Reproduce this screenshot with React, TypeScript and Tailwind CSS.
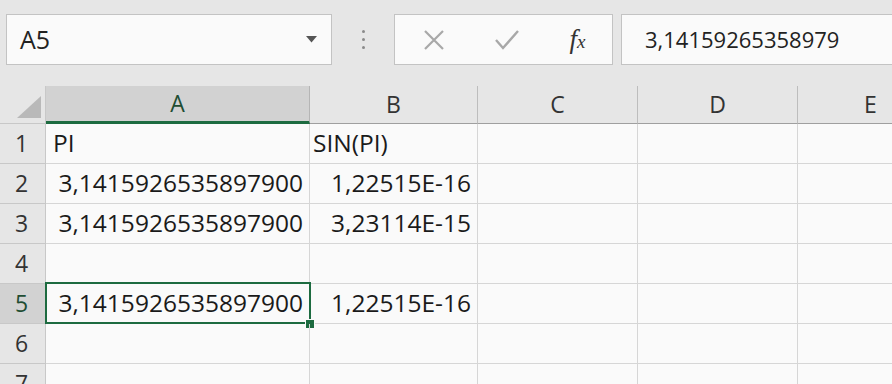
import React from "react";

const font = { fontFamily: '"Open Sans", "Noto Sans", Arial, sans-serif' };

const cols = ["A", "B", "C", "D", "E"];

interface Row {
  n: number;
  a?: string;
  b?: string;
  aRight?: boolean;
  bRight?: boolean;
}

const rows: Row[] = [
  { n: 1, a: "PI", b: "SIN(PI)" },
  { n: 2, a: "3,1415926535897900", b: "1,22515E-16", aRight: true, bRight: true },
  { n: 3, a: "3,1415926535897900", b: "3,23114E-15", aRight: true, bRight: true },
  { n: 4 },
  { n: 5, a: "3,1415926535897900", b: "1,22515E-16", aRight: true, bRight: true },
  { n: 6 },
  { n: 7 },
];

const FormulaBar: React.FC = () => (
  <div className="h-[86px] bg-[#e6e6e6] flex items-start pt-[14px] pl-[6px]">
    {/* name box */}
    <div className="w-[326px] h-[51px] bg-[#fafafa] border border-[#c3c3c3] flex items-center pl-[13px] pr-[14px] justify-between">
      <span className="text-[25px] text-[#222]">A5</span>
      <svg width="11" height="7" viewBox="0 0 11 7">
        <path d="M0 0 L11 0 L5.5 6.5 Z" fill="#555" />
      </svg>
    </div>
    {/* separator dots */}
    <div className="w-[62px] h-[51px] flex flex-col items-center justify-center gap-[5px]">
      <span className="w-[3px] h-[3px] rounded-full bg-[#8a8a8a]" />
      <span className="w-[3px] h-[3px] rounded-full bg-[#8a8a8a]" />
      <span className="w-[3px] h-[3px] rounded-full bg-[#8a8a8a]" />
    </div>
    {/* buttons */}
    <div className="w-[219px] h-[51px] bg-[#fafafa] border border-[#c3c3c3] flex items-center">
      <div className="w-[73px] flex justify-center pl-[4px]">
        <svg width="22" height="22" viewBox="0 0 22 22">
          <path d="M2 2 L20 20 M20 2 L2 20" stroke="#a8a8a8" strokeWidth="2.2" />
        </svg>
      </div>
      <div className="w-[73px] flex justify-center pl-[4px]">
        <svg width="26" height="22" viewBox="0 0 26 22">
          <path d="M2 11 L9 19 L24 2" stroke="#a8a8a8" strokeWidth="2.4" fill="none" />
        </svg>
      </div>
      <div className="flex-1 flex justify-center pl-[2px]">
        <span className="text-[27px] italic text-[#333] leading-none" style={{ fontFamily: '"Liberation Serif", serif' }}>
          f<span className="text-[19px]">x</span>
        </span>
      </div>
    </div>
    <div className="w-[8px]" />
    {/* formula input */}
    <div className="flex-1 h-[51px] bg-[#fafafa] border border-[#c3c3c3] border-r-0 flex items-center pl-[23px]">
      <span className="text-[22px] text-[#222]">3,14159265358979</span>
    </div>
  </div>
);

export default function App() {
  return (
    <div className="w-[892px] h-[384px] overflow-hidden bg-[#fafafa]" style={font}>
      <FormulaBar />
      <div className="grid grid-cols-[46px_264px_168px_160px_160px_1fr] grid-rows-[38px_repeat(7,40px)]">
        {/* header row */}
        <div className="bg-[#e6e6e6] border-r border-b border-[#c8c8c8] relative">
          <svg className="absolute left-[17px] top-[10px]" width="24" height="22" viewBox="0 0 24 22">
            <path d="M24 0 L24 22 L0 22 Z" fill="#b9b9b9" />
          </svg>
        </div>
        {cols.map((c, i) => (
          <div
            key={c}
            className={
              i === 0
                ? "bg-[#d2d2d2] border-r border-[#b5b5b5] border-b-[3px] border-b-[#1d6b40] flex items-center justify-center text-[23px] text-[#1f4d33]"
                : i === 4
                  ? "bg-[#e6e6e6] border-b border-[#9f9f9f] flex items-center justify-start pl-[66px] text-[23px] text-[#333]"
                  : "bg-[#e6e6e6] border-r border-b border-[#bdbdbd] border-b-[#9f9f9f] flex items-center justify-center text-[23px] text-[#333]"
            }
          >
            {c}
          </div>
        ))}
        {rows.map((r) => (
          <React.Fragment key={r.n}>
            <div
              className={
                (r.n === 5 ? "bg-[#d2d2d2] text-[#1f4d33] " : "bg-[#e6e6e6] text-[#333] ") +
                "border-r border-b border-[#c8c8c8] flex items-center justify-center text-[23px] pr-[2px]"
              }
            >
              {r.n}
            </div>
            <div
              className={
                "relative border-r border-b border-[#d6d6d6] flex items-center text-[24.5px] text-[#1a1a1a] whitespace-nowrap " +
                (r.aRight ? "justify-end pr-[6px]" : "justify-start pl-[7px]")
              }
            >
              {r.a}
              {r.n === 5 && (
                <>
                  <div className="absolute -left-px -top-[2px] -right-[2px] -bottom-px border-2 border-[#1d6b40]" />
                  <div className="absolute -right-[6px] -bottom-[6px] w-[10px] h-[10px] bg-[#1d6b40] border border-[#fafafa]" />
                </>
              )}
            </div>
            <div
              className={
                "border-r border-b border-[#d6d6d6] flex items-center text-[24.5px] text-[#1a1a1a] whitespace-nowrap " +
                (r.bRight ? "justify-end pr-[6px]" : "justify-start pl-[3px]")
              }
            >
              {r.b}
            </div>
            <div className="border-r border-b border-[#d6d6d6]" />
            <div className="border-r border-b border-[#d6d6d6]" />
            <div className="border-b border-[#d6d6d6]" />
          </React.Fragment>
        ))}
      </div>
    </div>
  );
}
